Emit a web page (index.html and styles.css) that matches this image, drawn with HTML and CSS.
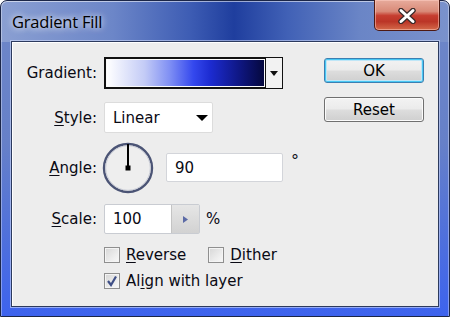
FILE: index.html
```html
<!DOCTYPE html>
<html>
<head>
<meta charset="utf-8">
<link rel="stylesheet" href="styles.css">
</head>
<body>
<div class="window">
  <div class="titlebar">
    <span class="title">Gradient Fill</span>
    <div class="close">
      <svg width="20" height="16" viewBox="0 0 20 16">
        <path d="M4 2.5 L16 13.5 M16 2.5 L4 13.5" stroke="#3a2a2a" stroke-width="5.5" stroke-linecap="round" fill="none"/>
        <path d="M4 2.5 L16 13.5 M16 2.5 L4 13.5" stroke="#ffffff" stroke-width="3" stroke-linecap="round" fill="none"/>
      </svg>
    </div>
  </div>
  <div class="panel">
    <div class="form">
      <div class="row r-grad">
        <span class="lbl">Gradient:</span>
        <div class="swatch">
          <div class="grad"></div>
          <div class="drop">
            <svg width="8" height="5" viewBox="0 0 8 5"><path d="M0 0 H8 L4 5 Z" fill="#111"/></svg>
          </div>
        </div>
      </div>
      <div class="row r-style">
        <span class="lbl"><u>S</u>tyle:</span>
        <div class="select">
          <span>Linear</span>
          <svg width="12" height="6" viewBox="0 0 12 6"><path d="M0 0 H12 L6 6 Z" fill="#000"/></svg>
        </div>
      </div>
      <div class="row r-angle">
        <span class="lbl"><u>A</u>ngle:</span>
        <div class="dial">
          <svg width="52" height="52" viewBox="0 0 52 52">
            <circle cx="26" cy="26" r="24" fill="#eeeeee" stroke="#4b5475" stroke-width="2.4"/>
            <circle cx="26" cy="26" r="22.3" fill="none" stroke="#c9ccd6" stroke-width="1"/>
            <line x1="26" y1="2" x2="26" y2="26" stroke="#000" stroke-width="2"/>
            <rect x="23.5" y="23.5" width="5" height="5" fill="#000"/>
          </svg>
        </div>
        <div class="input angle">90</div>
        <span class="deg">°</span>
      </div>
      <div class="row r-scale">
        <span class="lbl"><u>S</u>cale:</span>
        <div class="scale">
          <span class="val">100</span>
          <span class="spin">
            <svg width="5" height="7" viewBox="0 0 5 7"><path d="M0 0 L5 3.5 L0 7 Z" fill="#5b6aa6"/></svg>
          </span>
        </div>
        <span class="pct">%</span>
      </div>
      <div class="checks r-check1">
        <label class="check"><span class="box"></span><span><u>R</u>everse</span></label>
        <label class="check dither"><span class="box"></span><span><u>D</u>ither</span></label>
      </div>
      <div class="checks r-check2">
        <label class="check"><span class="box">
          <svg width="14" height="14" viewBox="0 0 14 14"><path d="M3 7 L6 11 L11 2.5" stroke="#3f4f86" stroke-width="2.2" fill="none"/></svg>
        </span><span>Al<u>i</u>gn with layer</span></label>
      </div>
    </div>
    <div class="buttons">
      <div class="btn default">OK</div>
      <div class="btn">Reset</div>
    </div>
  </div>
</div>
</body>
</html>
```

FILE: styles.css
```css
* { box-sizing: border-box; }
html, body { margin: 0; padding: 0; }
body {
  width: 450px;
  height: 317px;
  overflow: hidden;
  background: #fff;
  font-family: "DejaVu Sans", Verdana, sans-serif;
  font-size: 15px;
  color: #0a0a14;
}
.window {
  width: 450px;
  height: 317px;
  border: 1px solid #1b2648;
  border-radius: 7px 7px 0 0;
  padding: 0 10px 9px 10px;
  display: flex;
  flex-direction: column;
  background:
    linear-gradient(90deg, #8a9fd2 0%, #6c86c8 25%, #3e5db4 42%, #1f3e9e 52%, #4161b6 64%, #6a85c6 80%, #7a92cc 100%) top left / 100% 41px no-repeat,
    linear-gradient(180deg, #6e87c8 0%, #6680c8 45%, #4f70dc 75%, #3d63ee 100%);
  box-shadow: inset 0 1px 0 rgba(255,255,255,0.55), inset 1px 0 0 rgba(255,255,255,0.35), inset -1px 0 0 rgba(255,255,255,0.35);
}
.titlebar {
  height: 40px;
  margin: 0 -10px;
  padding-left: 11px;
  display: flex;
  justify-content: space-between;
  align-items: flex-start;
}
.title {
  font-family: "Open Sans", "Noto Sans", sans-serif;
  font-size: 16.5px;
  margin-top: 9px;
  color: #000;
  letter-spacing: -0.2px;
  text-shadow: 0 0 6px rgba(255,255,255,0.9), 0 0 10px rgba(255,255,255,0.6);
}
.close {
  width: 66px;
  height: 31px;
  margin-right: 9px;
  margin-top: -1px;
  border: 1px solid #4e1912;
  border-top: none;
  border-radius: 0 0 5px 5px;
  background: linear-gradient(180deg, #e7ab9c 0%, #d98a78 38%, #c63e30 52%, #bb3527 72%, #d46a4a 100%);
  box-shadow: inset 0 0 0 1px rgba(255,210,200,0.5);
  display: flex;
  align-items: center;
  justify-content: center;
  padding-top: 1px;
}
.panel {
  height: 266px;
  border: 1px solid #2c3a5e;
  background: #ededed;
  box-shadow: 0 0 0 1px rgba(220,230,255,0.55), inset 1px 1px 0 #ffffff;
  display: flex;
  justify-content: space-between;
}
.form {
  padding-top: 15px;
  display: flex;
  flex-direction: column;
}
.row {
  display: flex;
  align-items: center;
}
.lbl {
  width: 85px;
  text-align: right;
  margin-right: 7px;
  white-space: nowrap;
}
u { text-decoration-thickness: 1px; text-underline-offset: 2px; }
.r-grad { height: 32px; }
.r-style { height: 31px; margin-top: 13px; }
.r-angle { height: 51px; margin-top: 9px; }
.r-scale { height: 30px; margin-top: 11px; }
.r-check1 { margin-top: 13px; }
.r-check2 { margin-top: 10px; }

.swatch {
  width: 179px;
  height: 32px;
  border: 1px solid #111;
  display: flex;
  background: #111;
}
.grad {
  flex: 1;
  border: 1px solid #fafafa;
  margin: 1px 0 1px 1px;
  background: linear-gradient(90deg, #ffffff 0%, #c3cbf6 24%, #7f8ff4 40%, #3448ee 55%, #1c2bd0 66%, #0f1784 84%, #05083e 100%);
}
.drop {
  width: 16px;
  margin-left: 1px;
  background: #f2f2f2;
  display: flex;
  align-items: center;
  justify-content: center;
}
.select {
  width: 109px;
  height: 31px;
  border: 1px solid #dcdcdc;
  border-radius: 2px;
  background: #fff;
  display: flex;
  align-items: center;
  justify-content: space-between;
  padding: 0 4px 0 8px;
}
.dial {
  width: 52px;
  height: 52px;
  margin-left: -2px;
}
.input {
  background: #fff;
  border: 1px solid #d3d5da;
  border-radius: 2px;
  display: flex;
  align-items: center;
  padding-left: 8px;
}
.angle {
  width: 117px;
  height: 29px;
  margin-left: 12px;
}
.deg {
  margin-left: 8px;
  align-self: flex-start;
  margin-top: 9px;
  font-size: 16px;
}
.scale {
  width: 96px;
  height: 30px;
  border: 1px solid #c9ccd2;
  border-radius: 2px;
  background: #fff;
  display: flex;
}
.val {
  flex: 1;
  display: flex;
  align-items: center;
  padding-left: 8px;
}
.spin {
  width: 28px;
  border-left: 1px solid #c4c4c4;
  background: linear-gradient(180deg, #e6e6e6 0%, #d2d2d2 100%);
  display: flex;
  align-items: center;
  justify-content: center;
}
.pct { margin-left: 6px; }

.checks {
  display: flex;
  margin-left: 92px;
  height: 16px;
}
.check {
  display: flex;
  align-items: center;
  gap: 6px;
  line-height: 16px;
}
.check.dither { margin-left: 22px; }
.box {
  width: 16px;
  height: 16px;
  border: 1px solid #8f8f8f;
  background: linear-gradient(135deg, #d6d6d6 0%, #ececec 60%, #f8f8f8 100%);
  box-shadow: inset 0 0 0 1px #f4f4f4;
  display: flex;
  align-items: center;
  justify-content: center;
}
.buttons {
  padding-top: 16px;
  padding-right: 14px;
  display: flex;
  flex-direction: column;
  gap: 14px;
}
.btn {
  width: 100px;
  height: 25px;
  border: 1px solid #707070;
  border-radius: 3px;
  background: linear-gradient(180deg, #f3f3f3 0%, #ebebeb 48%, #dddddd 52%, #cfcfcf 100%);
  box-shadow: inset 0 0 0 1px #fbfbfb;
  display: flex;
  align-items: center;
  justify-content: center;
  color: #000;
}
.btn.default {
  border-color: #3c7fb1;
  box-shadow: inset 0 0 0 1px #48c8f4, inset 0 0 0 2px #bfe6f7;
}
```
